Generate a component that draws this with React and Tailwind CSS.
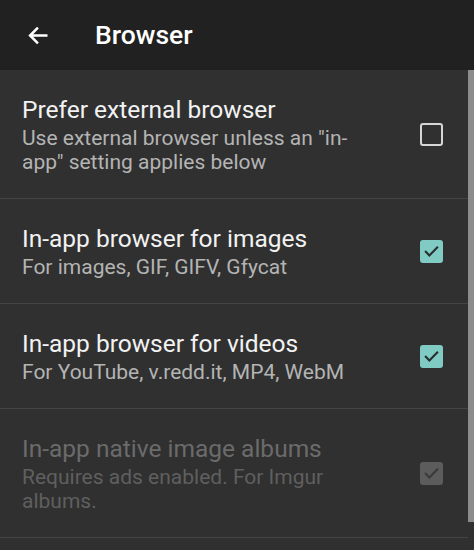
const settings = [
  {
    title: 'Prefer external browser',
    summary: 'Use external browser unless an "in-app" setting applies below',
    checked: false,
    enabled: true,
  },
  {
    title: 'In-app browser for images',
    summary: 'For images, GIF, GIFV, Gfycat',
    checked: true,
    enabled: true,
  },
  {
    title: 'In-app browser for videos',
    summary: 'For YouTube, v.redd.it, MP4, WebM',
    checked: true,
    enabled: true,
  },
  {
    title: 'In-app native image albums',
    summary: 'Requires ads enabled. For Imgur albums.',
    checked: true,
    enabled: false,
  },
];

function CheckBox({ checked, enabled }) {
  if (!checked) {
    return <div className="w-[23px] h-[23px] rounded-[3px] border-[2.5px] border-[#d6d6d6]" />;
  }
  return (
    <div
      className={`w-[23px] h-[23px] rounded-[3px] flex items-center justify-center ${
        enabled ? 'bg-[#80cbc4]' : 'bg-[#5c5c5c]'
      }`}
    >
      <svg width="17" height="17" viewBox="0 0 24 24" fill="none">
        <path
          d="M4 12.5l5 5L20 6.5"
          stroke={enabled ? '#26302f' : '#3a3a3a'}
          strokeWidth="3"
          strokeLinecap="square"
        />
      </svg>
    </div>
  );
}

function SettingRow({ item }) {
  return (
    <div className="flex items-center border-b border-[#444444] py-[24px] pl-[22px]">
      <div className="flex-1 min-w-0">
        <div
          className={`text-[24.5px] leading-[32px] whitespace-nowrap ${
            item.enabled ? 'text-[#f2f2f2]' : 'text-[#6b6b6b]'
          }`}
        >
          {item.title}
        </div>
        <div
          className={`text-[21px] leading-[24px] max-w-[350px] ${
            item.enabled ? 'text-[#b4b4b4]' : 'text-[#5f5f5f]'
          }`}
        >
          {item.summary}
        </div>
      </div>
      <div className="w-[48px] flex justify-start shrink-0">
        <CheckBox checked={item.checked} enabled={item.enabled} />
      </div>
    </div>
  );
}

export default function App() {
  return (
    <div
      className="w-[474px] h-[550px] overflow-hidden bg-[#303030] flex flex-col"
      style={{ fontFamily: 'Roboto, "Noto Sans", sans-serif' }}
    >
      <div className="h-[70px] shrink-0 bg-[#212121] flex items-center pl-[25px]">
        <svg width="27" height="27" viewBox="0 0 24 24" fill="none">
          <path d="M20 12H4.5M11.5 5l-7 7 7 7" stroke="#ffffff" strokeWidth="2.2" />
        </svg>
        <span className="ml-[43px] text-[26.5px] font-medium text-white">Browser</span>
      </div>
      <div className="flex flex-1 min-h-0">
        <div className="flex-1 min-w-0">
          {settings.map((s) => (
            <SettingRow key={s.title} item={s} />
          ))}
        </div>
        <div className="w-[6px] shrink-0 flex flex-col">
          <div className="h-[452px] bg-[#8c8c8c]" />
        </div>
      </div>
    </div>
  );
}
